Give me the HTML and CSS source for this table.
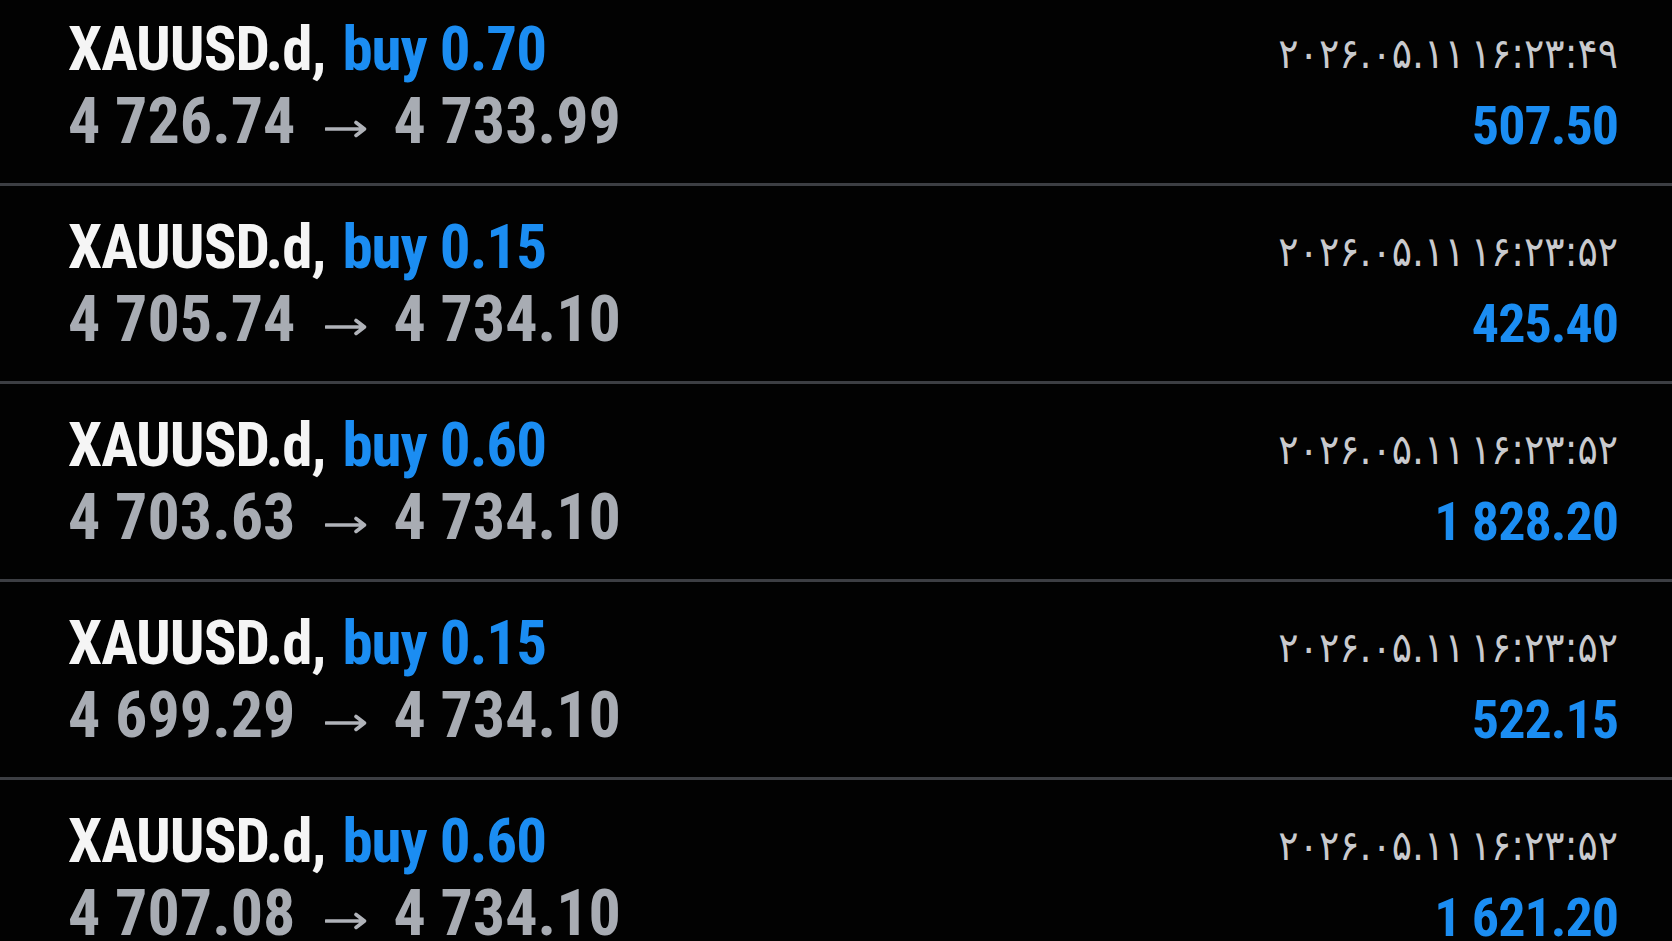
FILE: index.html
```html
<!DOCTYPE html>
<html lang="en">
<head>
<meta charset="utf-8">
<title>Trades</title>
<link rel="stylesheet" href="styles.css">
</head>
<body>
<div class="list">
  <div class="row">
    <div class="left">
      <div class="title"><span class="sym">XAUUSD.d,</span> <span class="side">buy 0.70</span></div>
      <div class="prices"><span>4 726.74</span><svg class="arrow" viewBox="0 0 42 18" width="42" height="18" aria-label="→"><path d="M1 9H39M31 2.5L39.5 9L31 15.5"/></svg><span>4 733.99</span></div>
    </div>
    <div class="right">
      <div class="date" dir="ltr">۲۰۲۶.۰۵.۱۱ ۱۶:۲۳:۴۹</div>
      <div class="profit">507.50</div>
    </div>
  </div>
  <div class="row">
    <div class="left">
      <div class="title"><span class="sym">XAUUSD.d,</span> <span class="side">buy 0.15</span></div>
      <div class="prices"><span>4 705.74</span><svg class="arrow" viewBox="0 0 42 18" width="42" height="18" aria-label="→"><path d="M1 9H39M31 2.5L39.5 9L31 15.5"/></svg><span>4 734.10</span></div>
    </div>
    <div class="right">
      <div class="date" dir="ltr">۲۰۲۶.۰۵.۱۱ ۱۶:۲۳:۵۲</div>
      <div class="profit">425.40</div>
    </div>
  </div>
  <div class="row">
    <div class="left">
      <div class="title"><span class="sym">XAUUSD.d,</span> <span class="side">buy 0.60</span></div>
      <div class="prices"><span>4 703.63</span><svg class="arrow" viewBox="0 0 42 18" width="42" height="18" aria-label="→"><path d="M1 9H39M31 2.5L39.5 9L31 15.5"/></svg><span>4 734.10</span></div>
    </div>
    <div class="right">
      <div class="date" dir="ltr">۲۰۲۶.۰۵.۱۱ ۱۶:۲۳:۵۲</div>
      <div class="profit">1 828.20</div>
    </div>
  </div>
  <div class="row">
    <div class="left">
      <div class="title"><span class="sym">XAUUSD.d,</span> <span class="side">buy 0.15</span></div>
      <div class="prices"><span>4 699.29</span><svg class="arrow" viewBox="0 0 42 18" width="42" height="18" aria-label="→"><path d="M1 9H39M31 2.5L39.5 9L31 15.5"/></svg><span>4 734.10</span></div>
    </div>
    <div class="right">
      <div class="date" dir="ltr">۲۰۲۶.۰۵.۱۱ ۱۶:۲۳:۵۲</div>
      <div class="profit">522.15</div>
    </div>
  </div>
  <div class="row">
    <div class="left">
      <div class="title"><span class="sym">XAUUSD.d,</span> <span class="side">buy 0.60</span></div>
      <div class="prices"><span>4 707.08</span><svg class="arrow" viewBox="0 0 42 18" width="42" height="18" aria-label="→"><path d="M1 9H39M31 2.5L39.5 9L31 15.5"/></svg><span>4 734.10</span></div>
    </div>
    <div class="right">
      <div class="date" dir="ltr">۲۰۲۶.۰۵.۱۱ ۱۶:۲۳:۵۲</div>
      <div class="profit">1 621.20</div>
    </div>
  </div>
</div>
</body>
</html>
```
FILE: styles.css
```css
html, body {
  margin: 0;
  padding: 0;
  background: #020202;
  overflow: hidden;
}
body {
  font-family: "Roboto Condensed", "Liberation Sans Narrow", "Liberation Sans", sans-serif;
}
.list {
  margin-top: -12px;
}
.row {
  box-sizing: border-box;
  height: 198px;
  display: flex;
  justify-content: space-between;
  padding: 0 54px 0 68px;
  border-bottom: 3px solid #3c3e43;
}
.left {
  padding-top: 26px;
}
.title {
  font-size: 61px;
  line-height: 71px;
  font-weight: 700;
  letter-spacing: -1px;
  white-space: nowrap;
}
.sym {
  color: #f5f5f5;
}
.side {
  color: #1b8df2;
  margin-left: 4px;
}
.prices {
  font-size: 64px;
  line-height: 73px;
  font-weight: 700;
  color: #a8acb3;
  white-space: nowrap;
}
.arrow {
  vertical-align: 5px;
  margin: 0 26px 0 30px;
  fill: none;
  stroke: #b0b3b9;
  stroke-width: 3.6;
  stroke-linecap: round;
  stroke-linejoin: round;
}
.right {
  padding-top: 42px;
  display: flex;
  flex-direction: column;
  align-items: flex-end;
  gap: 19px;
}
.date {
  font-family: "DejaVu Sans Condensed", "DejaVu Sans", sans-serif;
  font-size: 42px;
  line-height: 47px;
  letter-spacing: -1.8px;
  word-spacing: -6px;
  color: #c9cace;
  white-space: nowrap;
  direction: ltr;
  unicode-bidi: isolate;
}
.profit {
  font-size: 54px;
  line-height: 60px;
  font-weight: 700;
  letter-spacing: -1px;
  color: #1b8df2;
  white-space: nowrap;
}
```
